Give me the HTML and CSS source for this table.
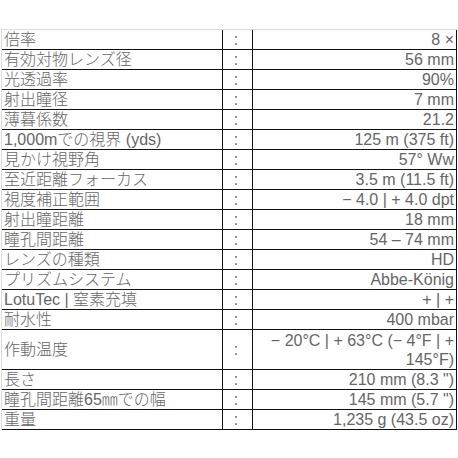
FILE: index.html
```html
<!DOCTYPE html>
<html lang="ja">
<head>
<meta charset="utf-8">
<title>仕様</title>
<link rel="stylesheet" href="styles.css">
</head>
<body>
<div class="page">
<table class="specs">
<tbody>
<tr><td class="label">倍率</td><td class="sep">:</td><td class="val">8 ×</td></tr>
<tr><td class="label">有効対物レンズ径</td><td class="sep">:</td><td class="val">56 mm</td></tr>
<tr><td class="label">光透過率</td><td class="sep">:</td><td class="val">90%</td></tr>
<tr><td class="label">射出瞳径</td><td class="sep">:</td><td class="val">7 mm</td></tr>
<tr><td class="label">薄暮係数</td><td class="sep">:</td><td class="val">21.2</td></tr>
<tr><td class="label">1,000mでの視界 (yds)</td><td class="sep">:</td><td class="val">125 m (375 ft)</td></tr>
<tr><td class="label">見かけ視野角</td><td class="sep">:</td><td class="val">57° Ww</td></tr>
<tr><td class="label">至近距離フォーカス</td><td class="sep">:</td><td class="val">3.5 m (11.5 ft)</td></tr>
<tr><td class="label">視度補正範囲</td><td class="sep">:</td><td class="val">− 4.0 | + 4.0 dpt</td></tr>
<tr><td class="label">射出瞳距離</td><td class="sep">:</td><td class="val">18 mm</td></tr>
<tr><td class="label">瞳孔間距離</td><td class="sep">:</td><td class="val">54 – 74 mm</td></tr>
<tr><td class="label">レンズの種類</td><td class="sep">:</td><td class="val">HD</td></tr>
<tr><td class="label">プリズムシステム</td><td class="sep">:</td><td class="val">Abbe-König</td></tr>
<tr><td class="label">LotuTec | 窒素充填</td><td class="sep">:</td><td class="val">+ | +</td></tr>
<tr><td class="label">耐水性</td><td class="sep">:</td><td class="val">400 mbar</td></tr>
<tr class="tall"><td class="label">作動温度</td><td class="sep">:</td><td class="val">− 20°C | + 63°C (− 4°F | + 145°F)</td></tr>
<tr><td class="label">長さ</td><td class="sep">:</td><td class="val">210 mm (8.3 ")</td></tr>
<tr><td class="label">瞳孔間距離65㎜での幅</td><td class="sep">:</td><td class="val">145 mm (5.7 ")</td></tr>
<tr><td class="label">重量</td><td class="sep">:</td><td class="val">1,235 g (43.5 oz)</td></tr>
</tbody>
</table>
</div>
</body>
</html>
```
FILE: styles.css
```css
html, body {
  margin: 0;
  padding: 0;
  background: #ffffff;
}

.page {
  padding: 29px 0 0 1px;
}

.specs {
  width: 456px;
  table-layout: fixed;
  border-collapse: separate;
  border-spacing: 0;
  border-top: 1px solid #dcdcdc;
  border-left: 1px solid #dcdcdc;
  font-family: "Liberation Sans", "Noto Sans CJK JP", sans-serif;
  font-size: 16px;
  font-weight: 300;
  color: #666666;
}

.specs td {
  box-sizing: border-box;
  padding: 1px 2px 0 2px;
  line-height: 18px;
  border-right: 1px solid #111111;
  border-bottom: 1px solid #111111;
  vertical-align: middle;
  white-space: nowrap;
}

.specs td.label {
  width: 221px;
  text-align: left;
}

.specs td.sep {
  width: 30px;
  text-align: center;
  padding-right: 5px;
}

.specs td.val {
  width: 204px;
  text-align: right;
}

.specs tr.tall td.val {
  white-space: normal;
  line-height: 19px;
}
```
